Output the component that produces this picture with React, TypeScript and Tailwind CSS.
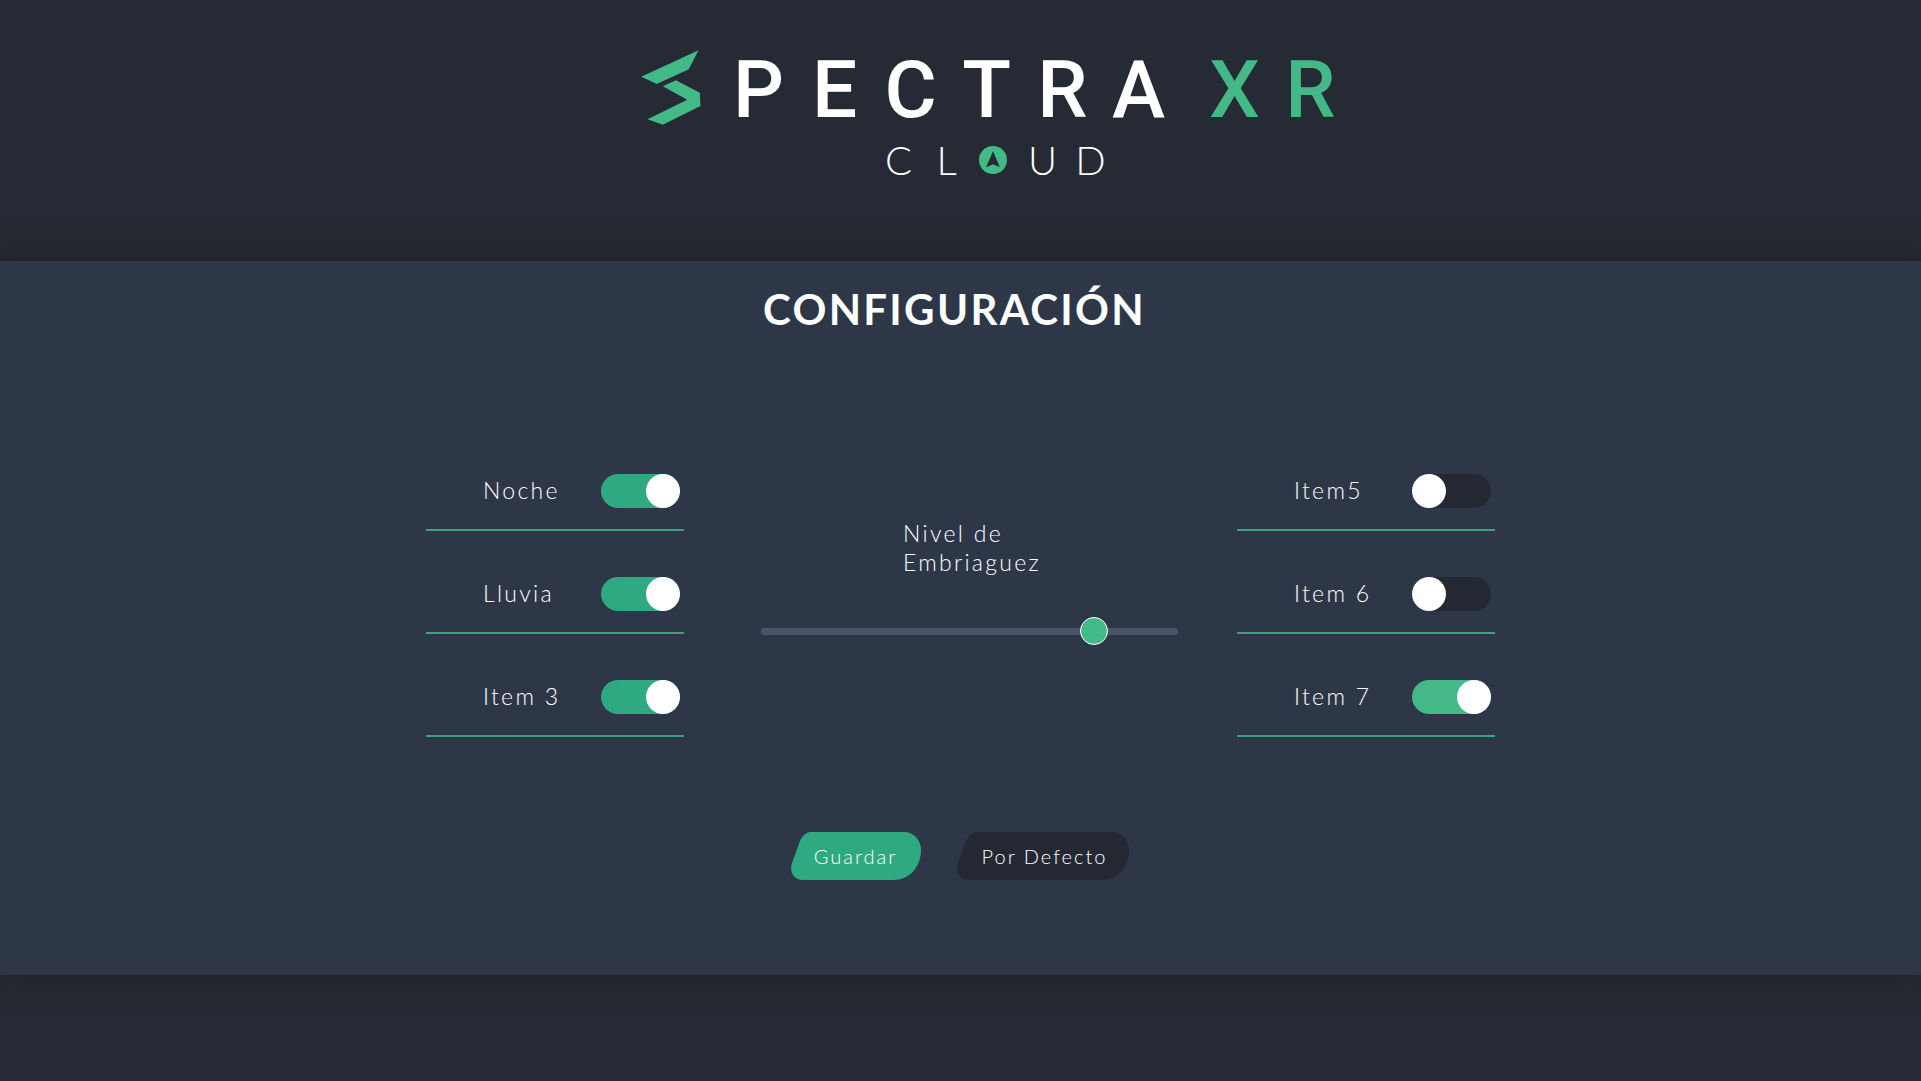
import { useState } from "react";

type Item = { id: string; label: string; on: boolean; bright?: boolean };

const leftItems: Item[] = [
  { id: "noche", label: "Noche", on: true },
  { id: "lluvia", label: "Lluvia", on: true },
  { id: "item3", label: "Item 3", on: true },
];

const rightItems: Item[] = [
  { id: "item5", label: "Item5", on: false, bright: true },
  { id: "item6", label: "Item 6", on: false, bright: true },
  { id: "item7", label: "Item 7", on: true, bright: true },
];

function Emblem() {
  return (
    <svg viewBox="33 31 179 225" className="h-[75px] w-[60px]" fill="#42b987" aria-hidden="true">
      <polygon points="205,32 176,89 80,133 33,111" />
      <polygon points="137,122 209,159 211,199 98,255 52,239 171,180 98,140" />
    </svg>
  );
}

function Compass() {
  return (
    <svg viewBox="0 0 86 86" className="size-7" aria-hidden="true">
      <circle cx="43" cy="43" r="43" fill="#42b987" />
      <path d="M43 15 64 65 43 56 22 65Z" fill="#262a34" />
    </svg>
  );
}

function Letters({ text, className }: { text: string; className: string }) {
  return (
    <span className="flex">
      {text.split("").map((ch, i) => (
        <span key={i} className={className}>
          {ch}
        </span>
      ))}
    </span>
  );
}

function Logo() {
  return (
    <h1 className="flex flex-col items-center pl-17" aria-label="Spectra XR Cloud">
      <span className="flex items-start">
        <Emblem />
        <span className="ml-5 flex gap-5 font-['Roboto'] text-[80px] leading-[80px] font-medium text-white">
          <Letters text="PECTRA" className="w-19 text-center" />
          <span className="text-[#42b987]">
            <Letters text="XR" className="w-19 text-center" />
          </span>
        </span>
      </span>
      <span className="mt-1.5 flex items-center text-[40px] leading-12 font-light text-white">
        <Letters text="CL" className="w-12 text-center" />
        <span className="flex w-12 pl-2">
          <Compass />
        </span>
        <Letters text="UD" className="w-12 text-center" />
      </span>
    </h1>
  );
}

function ToggleRow({ item }: { item: Item }) {
  const [on, setOn] = useState(item.on);
  return (
    <li className="flex items-center justify-between border-b-2 border-[#3ba37c] pr-1 pb-[21px] pl-[57px]">
      <label htmlFor={item.id} className="pb-0.5 leading-7">
        {item.label}
      </label>
      <input
        id={item.id}
        type="checkbox"
        role="switch"
        checked={on}
        onChange={(e) => setOn(e.target.checked)}
        className={
          "flex h-[34px] w-[79px] cursor-pointer appearance-none items-center rounded-full bg-[#242832] before:size-[34px] before:rounded-full before:bg-white before:content-[''] checked:justify-end " +
          (item.bright ? "checked:bg-[#42b987]" : "checked:bg-[#2fa981]")
        }
      />
    </li>
  );
}

function ToggleList({ items }: { items: Item[] }) {
  return (
    <ul className="flex w-[258px] flex-col gap-[46px]">
      {items.map((item) => (
        <ToggleRow key={item.id} item={item} />
      ))}
    </ul>
  );
}

function LevelSlider() {
  const [level, setLevel] = useState(82);
  return (
    <div className="mr-[59px] ml-[77px] flex w-[417px] flex-col pt-[45px]">
      <label htmlFor="nivel" className="pl-[142px] leading-[29px]">
        Nivel de
        <br />
        Embriaguez
      </label>
      <input
        id="nivel"
        type="range"
        min={0}
        max={100}
        value={level}
        onChange={(e) => setLevel(Number(e.target.value))}
        className="mt-10 h-7 w-full cursor-pointer appearance-none bg-transparent [&::-webkit-slider-runnable-track]:h-[7px] [&::-webkit-slider-runnable-track]:rounded-full [&::-webkit-slider-runnable-track]:bg-[#4a5568] [&::-webkit-slider-thumb]:-mt-[11px] [&::-webkit-slider-thumb]:size-7 [&::-webkit-slider-thumb]:appearance-none [&::-webkit-slider-thumb]:rounded-full [&::-webkit-slider-thumb]:border [&::-webkit-slider-thumb]:border-white [&::-webkit-slider-thumb]:bg-[#42b987]"
      />
    </div>
  );
}

function SlantedButton({ label, width, fill, className }: { label: string; width: number; fill: string; className: string }) {
  const w = width;
  const d = `M20 0H${w - 17}C${w - 7} 0 ${w} 8 ${w} 18C${w} 34 ${w - 11} 48 ${w - 27} 48H12C3 48 -2 40 1 31L9 9C11 4 15 0 20 0Z`;
  return (
    <button type="button" className={"relative h-12 cursor-pointer text-xl tracking-widest text-white " + className}>
      <svg viewBox={`0 0 ${w} 48`} className="absolute inset-0 size-full" aria-hidden="true">
        <path d={d} fill={fill} />
      </svg>
      <span className="relative">{label}</span>
    </button>
  );
}

export default function App() {
  return (
    <div className="flex min-h-screen flex-col bg-[#262a34] font-['Lato',sans-serif] text-white">
      <header className="pt-[50px] pb-[77px]">
        <Logo />
      </header>
      <main className="flex flex-col items-center bg-[#2d3748] pt-6 pb-[95px] text-[23px] font-light tracking-widest shadow-[0_0_30px_10px_rgba(0,0,0,0.15)]">
        <h2 className="pr-3 text-[42px] leading-12 font-bold">CONFIGURACIÓN</h2>
        <div className="mt-[141px] flex items-start justify-center">
          <ToggleList items={leftItems} />
          <LevelSlider />
          <ToggleList items={rightItems} />
        </div>
        <div className="mt-[95px] flex gap-9 pr-0.5">
          <SlantedButton label="Guardar" width={130} fill="#2fa981" className="w-[130px]" />
          <SlantedButton label="Por Defecto" width={172} fill="#242832" className="w-[172px] pl-1" />
        </div>
      </main>
    </div>
  );
}
